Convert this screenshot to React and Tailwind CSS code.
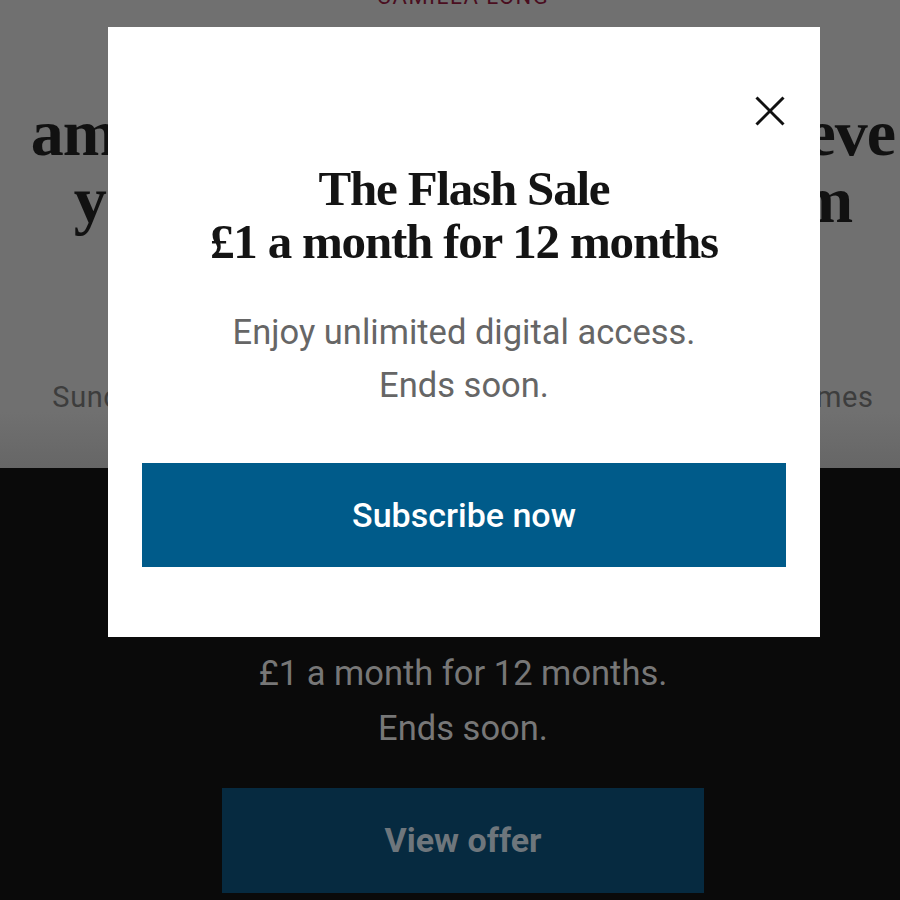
import React from 'react';

const sans = "font-['Roboto','Liberation_Sans',sans-serif]";
const serif = "font-['Liberation_Serif','Times_New_Roman',serif]";

const CloseIcon = () => (
  <svg width="30" height="30" viewBox="0 0 30 30" fill="none" stroke="#111" strokeWidth="3">
    <line x1="1.5" y1="1.5" x2="28.5" y2="28.5" />
    <line x1="28.5" y1="1.5" x2="1.5" y2="28.5" />
  </svg>
);

const ArticleBackdrop = () => (
  <div className="flex h-[900px] flex-col">
    {/* article header, dimmed behind the dialog */}
    <section className="h-[468px] overflow-hidden bg-[linear-gradient(to_bottom,#707070_88%,#666666)] pl-[26px]">
      <p className={`${sans} -mt-[15px] text-center text-[22px] leading-[24px] tracking-[1.5px] text-[#4a0e1f] uppercase`}>
        Camilla Long
      </p>
      <h1 className={`${serif} mt-[90px] text-center text-[66px] font-bold leading-[67px] tracking-[-1px] whitespace-nowrap text-[#111]`}>
        amazing, but I still can’t believe
        <br />
        you’d ever really fall for him
      </h1>
      <p className={`${sans} mt-[148px] text-center text-[29px] leading-[32px] tracking-[0.6px] whitespace-nowrap text-[#3d3d3d]`}>
        Sunday September 17 2023, 12.01am BST, The Sunday Times
      </p>
    </section>

    {/* paywall strip under the article */}
    <section className="flex flex-1 flex-col items-center bg-[#0a0a0a] pl-[26px] pt-[178px]">
      <p className={`${sans} text-center text-[34.5px] leading-[55px] text-[#777]`}>
        £1 a month for 12 months.
        <br />
        Ends soon.
      </p>
      <div className={`${sans} mt-[32px] flex h-[105px] w-[482px] items-center justify-center bg-[#062a40] text-[34px] font-bold text-[#6e767c]`}>
        View offer
      </div>
    </section>
  </div>
);

const FlashSaleDialog = () => (
  <div className="absolute left-[108px] top-[27px] flex h-[610px] w-[712px] flex-col items-center bg-white px-[34px] pt-[135px]">
    <button className="absolute right-[35px] top-[69px]" aria-label="Close">
      <CloseIcon />
    </button>
    <h2 className={`${serif} text-center text-[49px] font-bold leading-[53px] tracking-[-1.2px] text-[#141414]`}>
      The Flash Sale
      <br />
      £1 a month for 12 months
    </h2>
    <p className={`${sans} mt-[38px] text-center text-[34.5px] leading-[53px] text-[#666]`}>
      Enjoy unlimited digital access.
      <br />
      Ends soon.
    </p>
    <button className={`${sans} mt-[51px] flex h-[104px] w-full items-center justify-center bg-[#005b8a] text-[34px] font-medium text-white`}>
      Subscribe now
    </button>
  </div>
);

export default function App() {
  return (
    <div className="relative h-[900px] w-[900px] overflow-hidden">
      <ArticleBackdrop />
      <FlashSaleDialog />
    </div>
  );
}
